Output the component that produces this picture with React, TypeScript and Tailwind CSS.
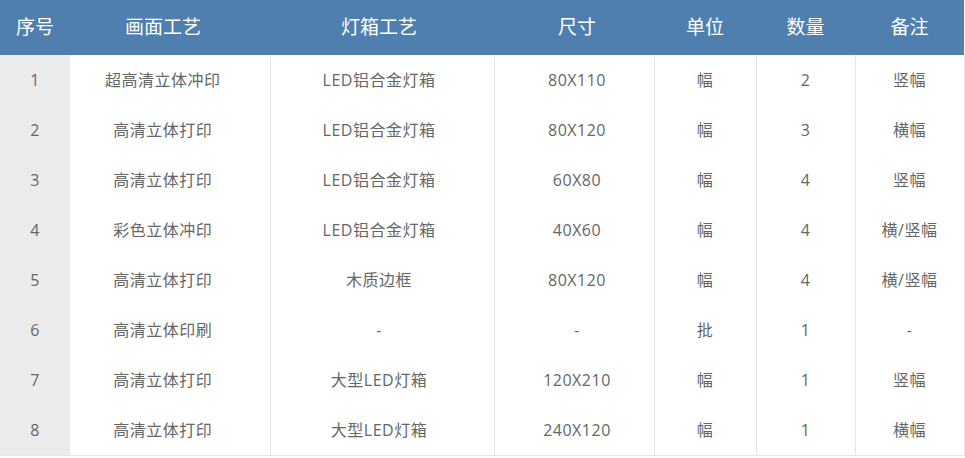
const headers = ['序号', '画面工艺', '灯箱工艺', '尺寸', '单位', '数量', '备注']

const rows = [
  ['1', '超高清立体冲印', 'LED铝合金灯箱', '80X110', '幅', '2', '竖幅'],
  ['2', '高清立体打印', 'LED铝合金灯箱', '80X120', '幅', '3', '横幅'],
  ['3', '高清立体打印', 'LED铝合金灯箱', '60X80', '幅', '4', '竖幅'],
  ['4', '彩色立体冲印', 'LED铝合金灯箱', '40X60', '幅', '4', '横/竖幅'],
  ['5', '高清立体打印', '木质边框', '80X120', '幅', '4', '横/竖幅'],
  ['6', '高清立体印刷', '-', '-', '批', '1', '-'],
  ['7', '高清立体打印', '大型LED灯箱', '120X210', '幅', '1', '竖幅'],
  ['8', '高清立体打印', '大型LED灯箱', '240X120', '幅', '1', '横幅'],
]

// column widths + small nudges so text sits where the reference has it
const cols = [
  'w-[70px]',
  'w-[200px] pr-[14px]',
  'w-[224px] pr-[6px]',
  'w-[160px] pl-[6px]',
  'w-[102px]',
  'w-[99px]',
  'w-[109px]',
]

export default function App() {
  return (
    <div className="w-[965px] h-[458px] bg-white font-['Open_Sans','Noto_Sans_CJK_SC',sans-serif]">
      <table className="w-[964px] table-fixed border-collapse">
        <thead>
          <tr className="h-[55px] bg-[#4f7fae]">
            {headers.map((h, i) => (
              <th key={h} className={`${cols[i]} py-0 text-center text-[19px] font-normal text-white`}>
                {h}
              </th>
            ))}
          </tr>
        </thead>
        <tbody>
          {rows.map((r, ri) => (
            <tr key={r[0]} className="h-[50px]">
              {r.map((c, i) => (
                <td
                  key={i}
                  className={[
                    cols[i],
                    'py-0 text-center text-[16px] tracking-[0.5px] text-[#666]',
                    i === 0 ? 'bg-[#ebebeb]' : 'border-r border-[#e6e6e6]',
                    ri === rows.length - 1 ? 'border-b border-b-[#e6e6e6]' : '',
                  ].join(' ')}
                >
                  {c}
                </td>
              ))}
            </tr>
          ))}
        </tbody>
      </table>
    </div>
  )
}
